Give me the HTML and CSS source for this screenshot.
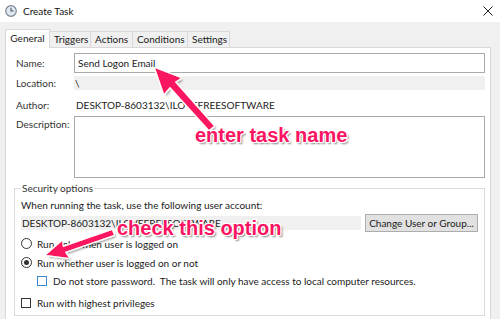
FILE: index.html
```html
<!DOCTYPE html>
<html lang="en">
<head>
    <meta charset="UTF-8">
    <title>Create Task</title>
    <link rel="stylesheet" href="styles.css">
</head>
<body>
<div class="window">
    <!-- Title bar -->
    <div class="titlebar">
        <svg class="app-icon" width="12" height="12" viewBox="0 0 12 12">
            <circle cx="6" cy="6" r="5.3" fill="#dfe7ef" stroke="#7b8794" stroke-width="1.2"/>
            <path d="M6 2.8 V6 H8.6" fill="none" stroke="#4a5561" stroke-width="1.1"/>
        </svg>
        <span class="title">Create Task</span>
        <svg class="close" width="10" height="10" viewBox="0 0 10 10">
            <path d="M0.5 0.5 L9.5 9.5 M9.5 0.5 L0.5 9.5" stroke="#222" stroke-width="1"/>
        </svg>
    </div>

    <div class="dialog">
        <!-- Tabs -->
        <div class="tabs">
            <div class="tab active">General</div>
            <div class="tab">Triggers</div>
            <div class="tab">Actions</div>
            <div class="tab">Conditions</div>
            <div class="tab">Settings</div>
        </div>

        <div class="panel">
            <div class="fields">
                <div class="label">Name:</div>
                <div class="input">Send Logon Email</div>

                <div class="label">Location:</div>
                <div class="readonly">\</div>

                <div class="label">Author:</div>
                <div class="plain">DESKTOP-8603132\ILOVEFREESOFTWARE</div>

                <div class="label label-top">Description:</div>
                <div class="textarea"></div>
            </div>

            <fieldset class="group">
                <legend>Security options</legend>
                <div class="when">When running the task, use the following user account:</div>
                <div class="account-row">
                    <div class="account">DESKTOP-8603132\ILOVEFREESOFTWARE</div>
                    <button class="btn">Change User or Group...</button>
                </div>
                <div class="option opt-1"><span class="radio"></span>Run only when user is logged on</div>
                <div class="option opt-2"><span class="radio checked"></span>Run whether user is logged on or not</div>
                <div class="option opt-3 sub"><span class="check focus"></span>Do not store password.&nbsp; The task will only have access to local computer resources.</div>
                <div class="option opt-4"><span class="check"></span>Run with highest privileges</div>
            </fieldset>
        </div>
    </div>

    <!-- Annotations drawn over the screenshot -->
    <svg class="arrows" width="500" height="319" viewBox="0 0 500 319">
        <defs>
            <filter id="glow" x="-20%" y="-20%" width="140%" height="140%">
                <feMorphology in="SourceAlpha" operator="dilate" radius="1.2" result="thick"/>
                <feFlood flood-color="#ffffff"/>
                <feComposite in2="thick" operator="in" result="outline"/>
                <feGaussianBlur in="SourceAlpha" stdDeviation="1" result="blur"/>
                <feOffset in="blur" dx="1.5" dy="1.5" result="shadow"/>
                <feFlood flood-color="#000" flood-opacity="0.45"/>
                <feComposite in2="shadow" operator="in" result="shadowc"/>
                <feMerge>
                    <feMergeNode in="shadowc"/>
                    <feMergeNode in="outline"/>
                    <feMergeNode in="SourceGraphic"/>
                </feMerge>
            </filter>
        </defs>
        <g filter="url(#glow)" fill="#fb1462">
            <path d="M155 68 L181 78 L175 82 L214 126 L209 130 L170 87 L164 94 Z"/>
            <path d="M46 255 L62 241 L63 247 L112 230 L114 235 L65 252 L69 258 Z"/>
        </g>
    </svg>
    <div class="note note-name">enter task name</div>
    <div class="note note-option">check this option</div>
</div>
</body>
</html>
```

FILE: styles.css
```css
* {
    margin: 0;
    padding: 0;
    box-sizing: border-box;
}

body {
    font-family: Lato, "Noto Sans", sans-serif;
    font-size: 10px;
    color: #1b1b1b;
    background: #ffffff;
    width: 500px;
    height: 319px;
    overflow: hidden;
}

.window {
    position: relative;
    width: 500px;
    height: 319px;
    overflow: hidden;
}

/* Title bar */
.titlebar {
    height: 22px;
    background: #ffffff;
    display: flex;
    align-items: center;
    padding: 0 7px 0 5px;
}

.app-icon {
    margin-right: 6px;
}

.title {
    font-size: 10px;
    color: #111;
}

.close {
    margin-left: auto;
}

/* Dialog area */
.dialog {
    background: #f0f0f0;
    height: 297px;
    padding: 7px 9px 0 5px;
}

.tabs {
    display: flex;
    align-items: flex-end;
    height: 18px;
}

.tab {
    height: 16px;
    line-height: 14px;
    padding: 0 4px;
    border: 1px solid #d9d9d9;
    border-bottom: none;
    background: #f0f0f0;
    margin-left: -1px;
    text-align: center;
}

.tab:first-child {
    margin-left: 0;
}

.tab.active {
    height: 19px;
    line-height: 16px;
    background: #ffffff;
    margin-bottom: -1px;
    position: relative;
    z-index: 1;
    width: 45px;
}

.tab:nth-child(2) { width: 42px; }
.tab:nth-child(3) { width: 43px; }
.tab:nth-child(4) { width: 56px; }
.tab:nth-child(5) { width: 43px; }

.panel {
    background: #ffffff;
    border: 1px solid #d9d9d9;
    height: 290px;
    padding: 5px 5px 0 8px;
}

/* General fields */
.fields {
    display: grid;
    grid-template-columns: 58px 1fr;
    padding-left: 2px;
}

.label {
    display: flex;
    align-items: center;
    color: #333;
}

.label-top {
    align-items: flex-start;
    padding-top: 2px;
}

.input {
    height: 20px;
    border: 1px solid #a9a9a9;
    padding: 0 3px;
    display: flex;
    align-items: center;
}

.readonly {
    height: 14px;
    margin: 3px 0;
    background: #f0f0f0;
    padding-left: 1px;
    display: flex;
    align-items: center;
}

.plain {
    height: 23px;
    display: flex;
    align-items: center;
    padding-left: 2px;
}

.textarea {
    height: 62px;
    border: 1px solid #a9a9a9;
}

/* Security options */
.group {
    margin-top: 3px;
    border: 1px solid #dcdcdc;
    padding: 0 6px 0 6px;
    height: 135px;
}

.group legend {
    padding: 0 1px;
    line-height: 15px;
    color: #333;
}

.when {
    margin-top: 2px;
    line-height: 15px;
}

.account-row {
    display: flex;
    align-items: center;
    margin-top: 1px;
}

.account {
    width: 340px;
    height: 14px;
    background: #f0f0f0;
    line-height: 14px;
    padding-left: 1px;
}

.btn {
    margin-left: 4px;
    width: 113px;
    height: 18px;
    font-family: inherit;
    font-size: 10px;
    color: #1b1b1b;
    background: #e1e1e1;
    border: 1px solid #adadad;
    white-space: nowrap;
}

.option {
    display: flex;
    align-items: center;
    height: 19px;
    white-space: nowrap;
}

.opt-1 {
    margin-top: 2px;
}

.opt-3 {
    height: 18px;
}

.opt-4 {
    margin-top: 3px;
}

.sub {
    padding-left: 16px;
}

.radio {
    width: 11px;
    height: 11px;
    border: 1px solid #333;
    border-radius: 50%;
    margin-right: 5px;
    position: relative;
    flex-shrink: 0;
}

.radio.checked::after {
    content: "";
    position: absolute;
    left: 2px;
    top: 2px;
    width: 5px;
    height: 5px;
    border-radius: 50%;
    background: #333;
}

.check {
    width: 10px;
    height: 10px;
    border: 1px solid #333;
    margin-right: 6px;
    flex-shrink: 0;
}

.check.focus {
    border-color: #3c8ad6;
}

/* Annotations */
.arrows {
    position: absolute;
    left: 0;
    top: 0;
}

.note {
    position: absolute;
    font-family: "Liberation Sans", Arial, sans-serif;
    font-weight: bold;
    font-size: 20px;
    line-height: 20px;
    color: #fb1462;
    white-space: nowrap;
    text-shadow:
        -1px -1px 0 #fff, 1px -1px 0 #fff, -1px 1px 0 #fff, 1px 1px 0 #fff,
        0 -1px 0 #fff, 0 1px 0 #fff, -1px 0 0 #fff, 1px 0 0 #fff,
        2px 2px 2px rgba(0, 0, 0, 0.5);
}

.note-name {
    left: 195px;
    top: 125px;
}

.note-option {
    left: 117px;
    top: 218px;
}
```
